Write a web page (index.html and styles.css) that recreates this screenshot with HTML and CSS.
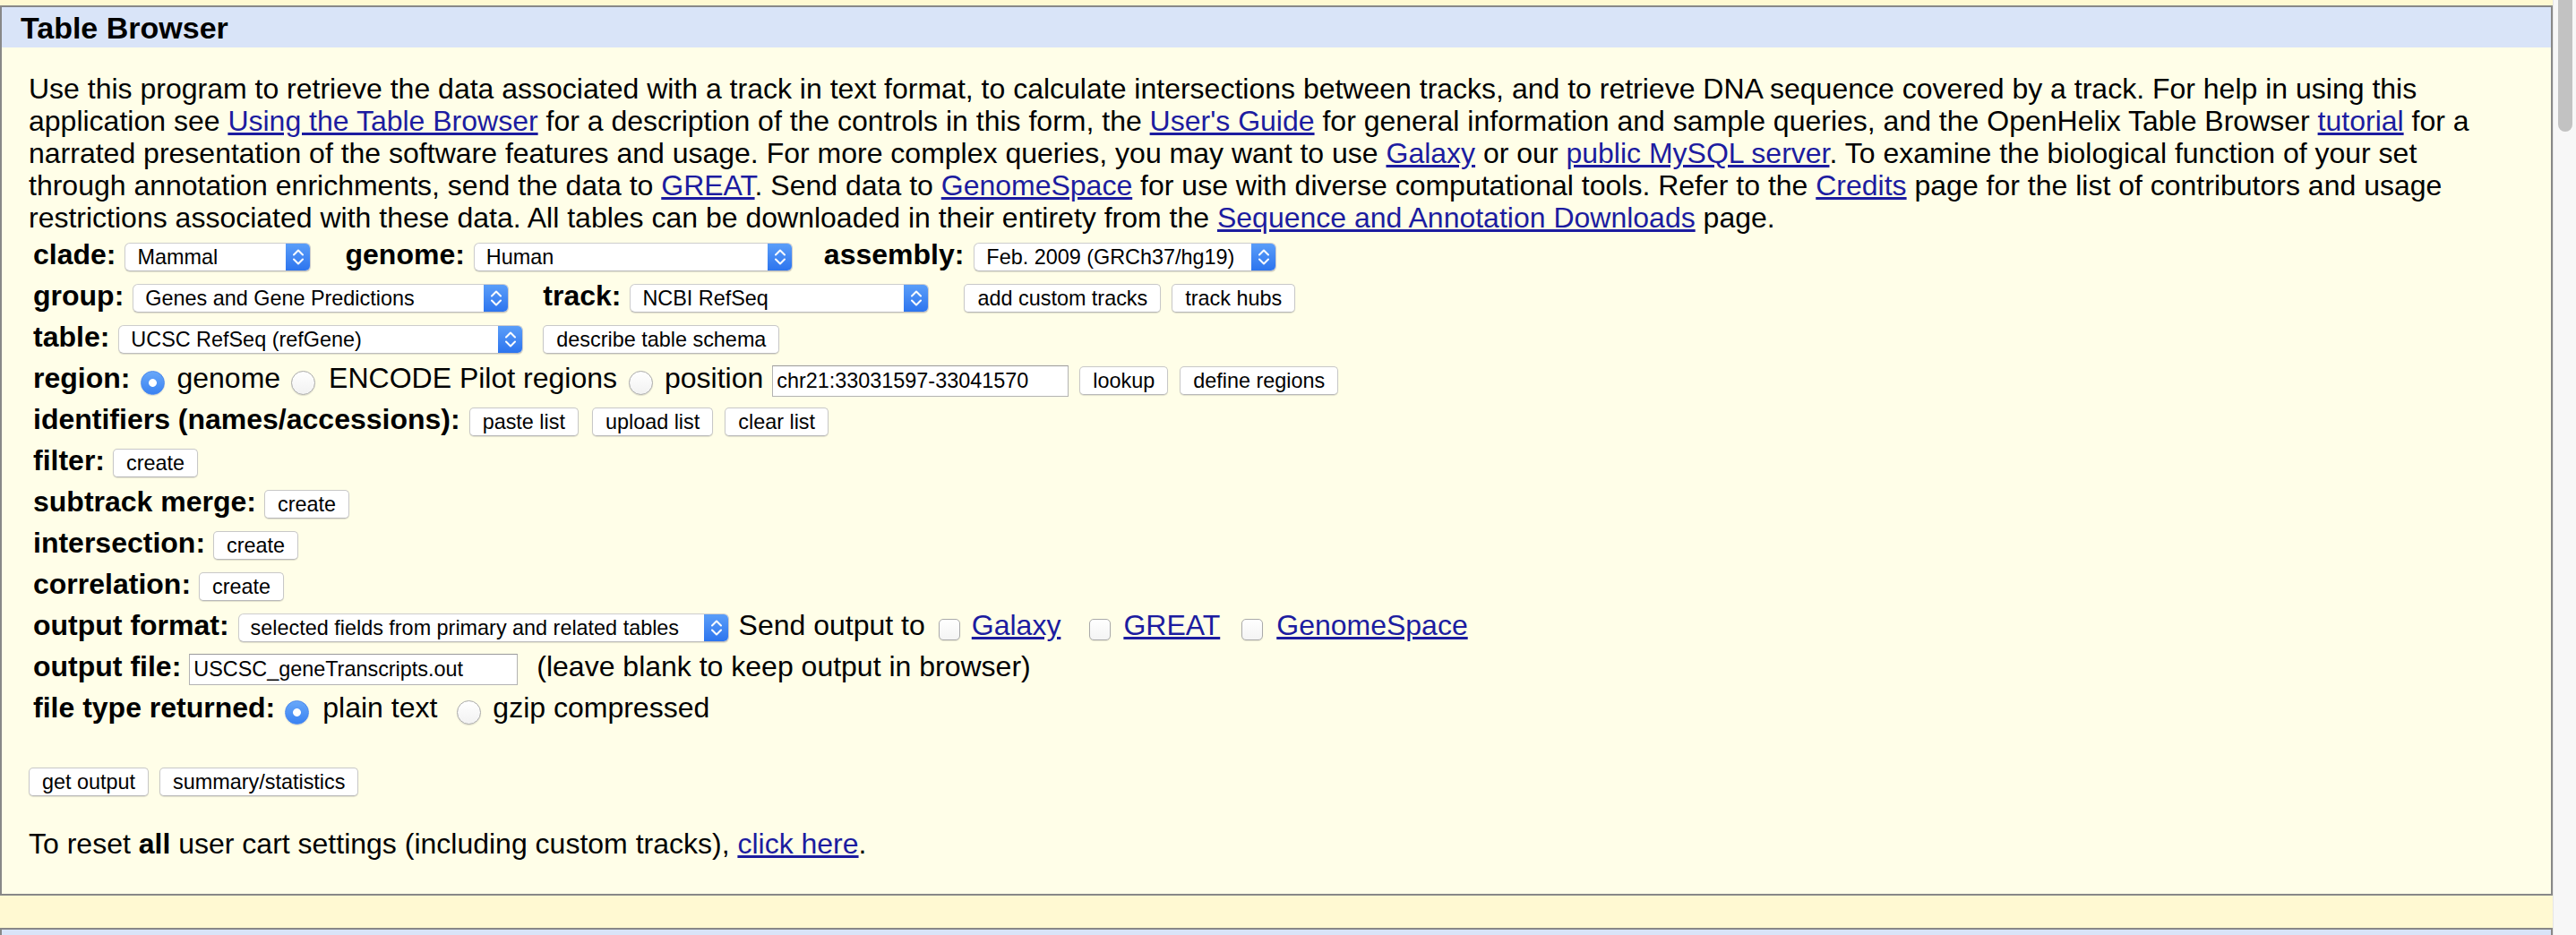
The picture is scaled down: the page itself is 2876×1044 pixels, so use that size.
FILE: index.html
```html
<!DOCTYPE html>
<html lang="en">
<head>
<meta charset="utf-8">
<title>Table Browser</title>
<link rel="stylesheet" href="styles.css">
</head>
<body>
<div class="page">
  <div class="main">
    <section class="box">
      <h1 class="box-title">Table Browser</h1>
      <div class="box-body">
        <p class="intro">Use this program to retrieve the data associated with a track in text format, to calculate intersections between tracks, and to retrieve DNA sequence covered by a track. For help in using this application see <a href="#">Using the Table Browser</a> for a description of the controls in this form, the <a href="#">User's Guide</a> for general information and sample queries, and the OpenHelix Table Browser <a href="#">tutorial</a> for a narrated presentation of the software features and usage. For more complex queries, you may want to use <a href="#">Galaxy</a> or our <a href="#">public MySQL server</a>. To examine the biological function of your set through annotation enrichments, send the data to <a href="#">GREAT</a>. Send data to <a href="#">GenomeSpace</a> for use with diverse computational tools. Refer to the <a href="#">Credits</a> page for the list of contributors and usage restrictions associated with these data. All tables can be downloaded in their entirety from the <a href="#">Sequence and Annotation Downloads</a> page.</p>

        <form class="form">
          <div class="row">
            <b class="lbl">clade:</b>
            <span class="sel w-clade ml10"><select><option>Mammal</option></select><span class="arrow"><svg viewBox="0 0 14 20" width="14" height="20"><path d="M2 7.5 L7 2.5 L12 7.5 M2 12.5 L7 17.5 L12 12.5"/></svg></span></span>
            <b class="lbl ml38">genome:</b>
            <span class="sel w-genome ml10"><select><option>Human</option></select><span class="arrow"><svg viewBox="0 0 14 20" width="14" height="20"><path d="M2 7.5 L7 2.5 L12 7.5 M2 12.5 L7 17.5 L12 12.5"/></svg></span></span>
            <b class="lbl ml35">assembly:</b>
            <span class="sel w-assembly ml11"><select><option>Feb. 2009 (GRCh37/hg19)</option></select><span class="arrow"><svg viewBox="0 0 14 20" width="14" height="20"><path d="M2 7.5 L7 2.5 L12 7.5 M2 12.5 L7 17.5 L12 12.5"/></svg></span></span>
          </div>
          <div class="row">
            <b class="lbl">group:</b>
            <span class="sel w-group ml10"><select><option>Genes and Gene Predictions</option></select><span class="arrow"><svg viewBox="0 0 14 20" width="14" height="20"><path d="M2 7.5 L7 2.5 L12 7.5 M2 12.5 L7 17.5 L12 12.5"/></svg></span></span>
            <b class="lbl ml38">track:</b>
            <span class="sel w-track ml10"><select><option>NCBI RefSeq</option></select><span class="arrow"><svg viewBox="0 0 14 20" width="14" height="20"><path d="M2 7.5 L7 2.5 L12 7.5 M2 12.5 L7 17.5 L12 12.5"/></svg></span></span>
            <button type="button" class="btn ml39">add custom tracks</button>
            <button type="button" class="btn ml12">track hubs</button>
          </div>
          <div class="row">
            <b class="lbl">table:</b>
            <span class="sel w-table ml10"><select><option>UCSC RefSeq (refGene)</option></select><span class="arrow"><svg viewBox="0 0 14 20" width="14" height="20"><path d="M2 7.5 L7 2.5 L12 7.5 M2 12.5 L7 17.5 L12 12.5"/></svg></span></span>
            <button type="button" class="btn ml22">describe table schema</button>
          </div>
          <div class="row">
            <b class="lbl">region:</b>
            <input type="radio" name="region" class="radio ml12" checked>
            <span class="txt ml13">genome</span>
            <input type="radio" name="region" class="radio ml12">
            <span class="txt ml15">ENCODE Pilot regions</span>
            <input type="radio" name="region" class="radio ml13">
            <span class="txt ml13">position</span>
            <input type="text" class="field w-pos ml10" value="chr21:33031597-33041570">
            <button type="button" class="btn ml12">lookup</button>
            <button type="button" class="btn ml13">define regions</button>
          </div>
          <div class="row">
            <b class="lbl">identifiers (names/accessions):</b>
            <button type="button" class="btn ml10">paste list</button>
            <button type="button" class="btn ml15">upload list</button>
            <button type="button" class="btn ml13">clear list</button>
          </div>
          <div class="row">
            <b class="lbl">filter:</b>
            <button type="button" class="btn ml9">create</button>
          </div>
          <div class="row">
            <b class="lbl">subtrack merge:</b>
            <button type="button" class="btn ml9">create</button>
          </div>
          <div class="row">
            <b class="lbl">intersection:</b>
            <button type="button" class="btn ml9">create</button>
          </div>
          <div class="row">
            <b class="lbl">correlation:</b>
            <button type="button" class="btn ml9">create</button>
          </div>
          <div class="row">
            <b class="lbl">output format:</b>
            <span class="sel w-format ml10"><select><option>selected fields from primary and related tables</option></select><span class="arrow"><svg viewBox="0 0 14 20" width="14" height="20"><path d="M2 7.5 L7 2.5 L12 7.5 M2 12.5 L7 17.5 L12 12.5"/></svg></span></span>
            <span class="txt ml11">Send output to</span>
            <input type="checkbox" class="check ml15">
            <a href="#" class="txt ml13">Galaxy</a>
            <input type="checkbox" class="check ml32">
            <a href="#" class="txt ml14">GREAT</a>
            <input type="checkbox" class="check ml24">
            <a href="#" class="txt ml15">GenomeSpace</a>
          </div>
          <div class="row">
            <b class="lbl">output file:</b>
            <input type="text" class="field w-file ml9" value="USCSC_geneTranscripts.out">
            <span class="txt ml21">(leave blank to keep output in browser)</span>
          </div>
          <div class="row">
            <b class="lbl">file type returned:</b>
            <input type="radio" name="ftype" class="radio ml11" checked>
            <span class="txt ml15">plain text</span>
            <input type="radio" name="ftype" class="radio ml22">
            <span class="txt ml13">gzip compressed</span>
          </div>

          <div class="actions">
            <button type="button" class="btn">get output</button>
            <button type="button" class="btn ml12">summary/statistics</button>
          </div>
        </form>

        <p class="reset">To reset <b>all</b> user cart settings (including custom tracks), <a href="#">click here</a>.</p>
      </div>
    </section>

    <section class="box next">
      <h2 class="box-title">Using the Table Browser</h2>
    </section>
  </div>
  <div class="scrollbar"><div class="thumb"></div></div>
</div>
</body>
</html>
```

FILE: styles.css
```css
html, body {
  margin: 0;
  padding: 0;
  height: 100%;
  overflow: hidden;
}

body {
  background: #FFF9D2;
  font-family: "Liberation Sans", Arial, Helvetica, sans-serif;
  font-size: 32px;
  color: #000;
}

a {
  color: #1c1ca0;
  text-decoration: underline;
}

.page {
  display: flex;
  height: 100%;
}

.main {
  flex: 1;
  padding-top: 6px;
  min-width: 0;
}

.scrollbar {
  width: 25px;
  flex: none;
  background: #f7f7f7;
  border-left: 1px solid #e6e6e6;
  display: flex;
  justify-content: center;
}

.thumb {
  width: 16px;
  height: 147px;
  background: #c2c2c2;
  border-radius: 0 0 8px 8px;
}

.box {
  border: 2px solid #888888;
  background: #FFFEE8;
}

.box.next {
  margin-top: 36px;
}

.box-title {
  margin: 0;
  background: #D9E4F8;
  font-size: 34px;
  font-weight: bold;
  line-height: 43px;
  padding: 2px 0 0 21px;
}

.box-body {
  padding: 28px 60px 38px 30px;
}

.intro {
  margin: 0;
  line-height: 36px;
}

.form {
  margin: 5px 0 0 0;
}

.row {
  display: flex;
  align-items: baseline;
  height: 46px;
  padding-left: 5px;
  white-space: nowrap;
  line-height: 36px;
}

.lbl {
  font-weight: bold;
}

.txt {
  line-height: 36px;
}

/* controls */
.btn,
.sel select,
.field {
  font-family: "Liberation Sans", Arial, Helvetica, sans-serif;
  font-size: 23.4px;
  color: #000;
}

.btn {
  height: 32px;
  line-height: 30px;
  padding: 0 14px;
  margin-top: 0;
  margin-bottom: 0;
  margin-right: 0;
  background: #fff;
  border: 1px solid #c8c8c8;
  border-bottom-color: #b9b9b9;
  border-radius: 5px;
  box-shadow: 0 1px 1px rgba(0, 0, 0, 0.12);
  white-space: nowrap;
}

.sel {
  display: inline-flex;
  height: 32px;
  box-sizing: border-box;
  background: #fff;
  border: 1px solid #cdcdcd;
  border-bottom-color: #bdbdbd;
  border-radius: 6px;
  box-shadow: 0 1px 1px rgba(0, 0, 0, 0.12);
  overflow: hidden;
}

.sel select {
  appearance: none;
  -webkit-appearance: none;
  flex: 1;
  min-width: 0;
  height: 30px;
  line-height: 30px;
  border: 0;
  margin: 0;
  padding: 0 0 0 13px;
  background: transparent;
  outline: none;
}

.sel .arrow {
  flex: none;
  width: 28px;
  margin: -1px -1px -1px 0;
  background: linear-gradient(#5c9ff9, #2b73ee);
  display: flex;
  align-items: center;
  justify-content: center;
  border-radius: 0 6px 6px 0;
}

.sel .arrow svg {
  fill: none;
  stroke: #fff;
  stroke-width: 2;
  stroke-linecap: round;
  stroke-linejoin: round;
}

.w-clade { width: 208px; }
.w-genome { width: 356px; }
.w-assembly { width: 338px; }
.w-group { width: 420px; }
.w-track { width: 334px; }
.w-table { width: 452px; }
.w-format { width: 548px; }

.field {
  height: 35px;
  box-sizing: border-box;
  line-height: 33px;
  padding: 0 4px;
  margin-top: 0;
  margin-bottom: 0;
  margin-right: 0;
  border: 1px solid #b3b3b3;
  border-top-color: #9a9a9a;
  background: #fff;
  border-radius: 0;
}

.w-pos { width: 331px; }
.w-file { width: 367px; }

.radio {
  appearance: none;
  -webkit-appearance: none;
  align-self: center;
  width: 27px;
  height: 27px;
  margin-top: 0;
  margin-bottom: 0;
  margin-right: 0;
  border-radius: 50%;
  border: 1px solid #a9a9a9;
  background: linear-gradient(#ffffff, #f2f2f2);
  box-shadow: 0 1px 1px rgba(0, 0, 0, 0.12);
  box-sizing: border-box;
}

.radio:checked {
  border-color: #4a88ee;
  background:
    radial-gradient(circle at center, #ffffff 0, #ffffff 4px, transparent 4.8px),
    linear-gradient(#68a8f9, #3a82f2);
}

.check {
  appearance: none;
  -webkit-appearance: none;
  align-self: center;
  width: 24px;
  height: 24px;
  margin-top: 0;
  margin-bottom: 0;
  margin-right: 0;
  border: 1px solid #aaaaaa;
  border-radius: 5px;
  background: linear-gradient(#ffffff, #f4f4f4);
  box-shadow: 0 1px 1px rgba(0, 0, 0, 0.1);
  box-sizing: border-box;
}

.actions {
  display: flex;
  align-items: baseline;
  margin-top: 39px;
}

.reset {
  margin: 35px 0 0 0;
  line-height: 36px;
}

/* spacing utilities */
.ml9 { margin-left: 9px; }
.ml10 { margin-left: 10px; }
.ml11 { margin-left: 11px; }
.ml12 { margin-left: 12px; }
.ml13 { margin-left: 13px; }
.ml14 { margin-left: 14px; }
.ml15 { margin-left: 15px; }
.ml21 { margin-left: 21px; }
.ml22 { margin-left: 22px; }
.ml24 { margin-left: 24px; }
.ml32 { margin-left: 32px; }
.ml35 { margin-left: 35px; }
.ml38 { margin-left: 38px; }
.ml39 { margin-left: 39px; }
```
